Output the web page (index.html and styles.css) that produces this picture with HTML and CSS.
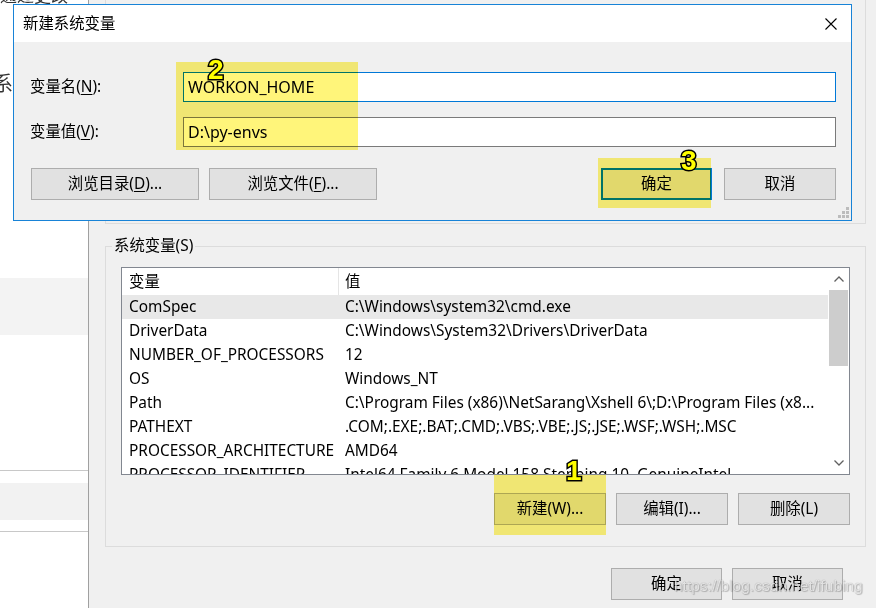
FILE: index.html
```html
<!DOCTYPE html>
<html lang="zh-CN">
<head>
<meta charset="utf-8">
<title>新建系统变量</title>
<link rel="stylesheet" href="styles.css">
</head>
<body>
<div class="app">
  <aside class="sidebar">
    <div class="sb-top"><span class="sb-cut">通过更改</span><span class="sb-label">系统</span></div>
    <div class="sb-active"></div>
    <div class="sb-gap"></div>
    <div class="sb-sep"><div class="sb-band"></div></div>
  </aside>
  <main class="main">
    <div class="group group-user"></div>
    <section class="group group-sys">
      <div class="group-title">系统变量(S)</div>
      <div class="listview">
        <div class="lv-body">
          <div class="lv-header"><span class="c1">变量</span><span class="c2">值</span></div>
          <div class="lv-row selected"><span class="c1">ComSpec</span><span class="c2">C:\Windows\system32\cmd.exe</span></div>
          <div class="lv-row"><span class="c1">DriverData</span><span class="c2">C:\Windows\System32\Drivers\DriverData</span></div>
          <div class="lv-row"><span class="c1">NUMBER_OF_PROCESSORS</span><span class="c2">12</span></div>
          <div class="lv-row"><span class="c1">OS</span><span class="c2">Windows_NT</span></div>
          <div class="lv-row"><span class="c1">Path</span><span class="c2">C:\Program Files (x86)\NetSarang\Xshell 6\;D:\Program Files (x8...</span></div>
          <div class="lv-row"><span class="c1">PATHEXT</span><span class="c2">.COM;.EXE;.BAT;.CMD;.VBS;.VBE;.JS;.JSE;.WSF;.WSH;.MSC</span></div>
          <div class="lv-row"><span class="c1">PROCESSOR_ARCHITECTURE</span><span class="c2">AMD64</span></div>
          <div class="lv-row"><span class="c1">PROCESSOR_IDENTIFIER</span><span class="c2">Intel64 Family 6 Model 158 Stepping 10, GenuineIntel</span></div>
        </div>
        <div class="scrollbar">
          <div class="sb-arrow"><svg width="10" height="6" viewBox="0 0 10 6"><path d="M0.5 5.5 L5 1 L9.5 5.5" fill="none" stroke="#606060" stroke-width="1.3"/></svg></div>
          <div class="sb-thumb"></div>
          <div class="sb-track"></div>
          <div class="sb-arrow"><svg width="10" height="6" viewBox="0 0 10 6"><path d="M0.5 0.5 L5 5 L9.5 0.5" fill="none" stroke="#606060" stroke-width="1.3"/></svg></div>
        </div>
      </div>
      <div class="btn-row">
        <button class="btn w112">新建(W)...</button>
        <button class="btn w112">编辑(I)...</button>
        <button class="btn w112">删除(L)</button>
      </div>
    </section>
    <div class="footer">
      <button class="btn w111">确定</button>
      <button class="btn w111">取消</button>
    </div>
  </main>
</div>

<div class="dialog">
  <div class="dlg-title">
    <span>新建系统变量</span>
    <svg class="close" width="12" height="12" viewBox="0 0 12 12"><path d="M0.5 0.5 L11.5 11.5 M11.5 0.5 L0.5 11.5" stroke="#000" stroke-width="1.1" fill="none"/></svg>
  </div>
  <div class="dlg-body">
    <div class="field">
      <label>变量名(<u>N</u>):</label>
      <div class="input focus">WORKON_HOME</div>
    </div>
    <div class="field">
      <label>变量值(<u>V</u>):</label>
      <div class="input">D:\py-envs</div>
    </div>
    <div class="dlg-buttons">
      <button class="btn w168 first">浏览目录(<u>D</u>)...</button>
      <button class="btn w168">浏览文件(<u>F</u>)...</button>
      <button class="btn w111 default ok">确定</button>
      <button class="btn w112">取消</button>
    </div>
    <svg class="grip" width="11" height="11" viewBox="0 0 11 11"><g fill="#bcbcbc"><rect x="8" y="0" width="3" height="3"/><rect x="4" y="4" width="3" height="3"/><rect x="8" y="4" width="3" height="3"/><rect x="0" y="8" width="3" height="3"/><rect x="4" y="8" width="3" height="3"/><rect x="8" y="8" width="3" height="3"/></g></svg>
  </div>
</div>

<div class="hl hl-2"></div>
<div class="hl hl-3"></div>
<div class="hl hl-1"></div>
<span class="num num-2">2</span>
<span class="num num-3">3</span>
<span class="num num-1">1</span>
<div class="watermark">https://blog.csdn.net/ifubing</div>
</body>
</html>
```
FILE: styles.css
```css
html, body {
  margin: 0;
  padding: 0;
}
body {
  width: 876px;
  height: 608px;
  overflow: hidden;
  position: relative;
  font-family: "Noto Sans", "Noto Sans CJK SC", sans-serif;
  font-size: 15.4px;
  line-height: 20px;
  color: #000;
  background: #f0f0f0;
}
u { text-decoration: underline; text-underline-offset: 2px; }

.app {
  display: flex;
  height: 608px;
}

/* left pane of the settings window */
.sidebar {
  width: 88px;
  flex: none;
  background: #fff;
  border-right: 1px solid #a0a0a0;
  display: flex;
  flex-direction: column;
  overflow: hidden;
}
.sb-top {
  height: 278px;
  display: flex;
  flex-direction: column;
  color: #333;
}
.sb-cut {
  margin-top: -14px;
  font-size: 17px;
  white-space: nowrap;
}
.sb-label {
  margin-top: 66px;
  margin-left: -7px;
  font-size: 20px;
  line-height: 24px;
  white-space: nowrap;
}
.sb-active {
  height: 57px;
  background: #f3f3f3;
}
.sb-gap { height: 135px; }
.sb-sep {
  border-top: 1px solid #c8c8c8;
  border-bottom: 1px solid #c8c8c8;
  padding: 12px 0 11px;
}
.sb-band {
  height: 37px;
  background: #f2f2f2;
}

/* main environment variables window */
.main {
  flex: 1;
  display: flex;
  flex-direction: column;
  padding: 0 10px 0 16px;
  background: #f0f0f0;
}
.group {
  border: 1px solid #dcdcdc;
}
.group-user {
  border-top: 0;
  box-sizing: border-box;
  height: 224px;
}
.group-sys {
  margin-top: 22px;
  padding: 0 15px 21px;
}
.group-title {
  width: fit-content;
  margin: -11px 0 0 -9px;
  padding: 0 2px;
  background: #f0f0f0;
  line-height: 20px;
}
.listview {
  margin-top: 11px;
  height: 208px;
  box-sizing: border-box;
  border: 1px solid #828790;
  background: #fff;
  display: flex;
  overflow: hidden;
}
.lv-body {
  flex: 1;
  min-width: 0;
  overflow: hidden;
}
.lv-header {
  height: 27px;
  display: flex;
  align-items: center;
}
.lv-header .c1 {
  border-right: 1px solid #e5e5e5;
  height: 27px;
  line-height: 27px;
}
.lv-row {
  height: 24px;
  line-height: 24px;
  display: flex;
  white-space: nowrap;
}
.lv-row.selected { background: #e8e8e8; }
.c1 {
  width: 217px;
  flex: none;
  box-sizing: border-box;
  padding-left: 7px;
  overflow: hidden;
}
.c2 {
  padding-left: 6px;
  overflow: hidden;
}

.scrollbar {
  width: 21px;
  flex: none;
  background: #fff;
  display: flex;
  flex-direction: column;
}
.sb-arrow {
  height: 22px;
  display: flex;
  align-items: center;
  justify-content: center;
}
.sb-thumb {
  height: 76px;
  margin: 0 1px;
  background: #cdcdcd;
}
.sb-track { flex: 1; }

.btn {
  height: 32px;
  box-sizing: border-box;
  border: 1px solid #adadad;
  background: #e1e1e1;
  font: inherit;
  color: #000;
  padding: 0;
  display: flex;
  align-items: center;
  justify-content: center;
  white-space: nowrap;
}
.w111 { width: 111px; }
.w112 { width: 112px; }
.w168 { width: 168px; }

.btn-row {
  margin-top: 18px;
  display: flex;
  justify-content: flex-end;
  gap: 10px;
}
.footer {
  margin-top: 21px;
  display: flex;
  justify-content: flex-end;
  gap: 10px;
  padding-right: 23px;
}

/* the dialog on top */
.dialog {
  position: absolute;
  left: 13px;
  top: 4px;
  width: 837px;
  height: 215px;
  border: 1px solid #1883d7;
  background: #f0f0f0;
  display: flex;
  flex-direction: column;
}
.dlg-title {
  height: 37px;
  flex: none;
  background: #fff;
  display: flex;
  align-items: center;
  justify-content: space-between;
  padding: 0 14px 0 9px;
}
.dlg-body {
  flex: 1;
  position: relative;
  padding: 30px 15px 0 16px;
  display: flex;
  flex-direction: column;
  gap: 15px;
}
.field {
  display: grid;
  grid-template-columns: 153px 1fr;
  align-items: center;
}
.input {
  height: 30px;
  box-sizing: border-box;
  border: 1px solid #7a7a7a;
  background: #fff;
  padding-left: 4px;
  display: flex;
  align-items: center;
  font-size: 16px;
}
.input.focus { border-color: #0078d7; }
.dlg-buttons {
  margin-top: 6px;
  display: flex;
  gap: 10px;
}
.dlg-buttons .first { margin-left: 1px; }
.dlg-buttons .ok { margin-left: auto; margin-right: 2px; }
.btn.default {
  border: 2px solid #0078d7;
}
.grip {
  position: absolute;
  right: 2px;
  bottom: 2px;
}

/* annotation overlays */
.hl {
  position: absolute;
  background: #fff57a;
  mix-blend-mode: multiply;
}
.hl-2 { left: 176px; top: 62px; width: 182px; height: 88px; }
.hl-3 { left: 598px; top: 158px; width: 113px; height: 50px; }
.hl-1 { left: 494px; top: 475px; width: 112px; height: 60px; }

.num {
  position: absolute;
  font-family: "Liberation Sans", "DejaVu Sans", sans-serif;
  font-weight: bold;
  font-size: 28px;
  line-height: 1;
  color: #ffff00;
  -webkit-text-stroke: 3px #000;
  paint-order: stroke fill;
}
.num-2 { left: 208px; top: 56px; }
.num-3 { left: 681px; top: 147px; }
.num-1 { left: 566px; top: 457px; }

.watermark {
  position: absolute;
  left: 674px;
  top: 576px;
  font-family: "Liberation Sans", Arial, sans-serif;
  font-size: 15.5px;
  line-height: 20px;
  color: rgba(255, 255, 255, 0.75);
  text-shadow: 0 0 1px rgba(0, 0, 0, 0.4), 1px 1px 1px rgba(0, 0, 0, 0.2);
  white-space: nowrap;
}
```
